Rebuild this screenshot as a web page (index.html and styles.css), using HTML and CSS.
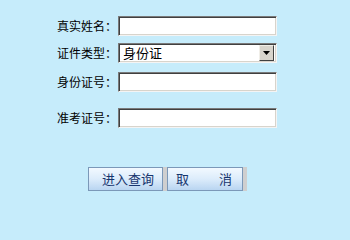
FILE: index.html
```html
<!DOCTYPE html>
<html lang="zh-CN">
<head>
<meta charset="utf-8">
<title>查询</title>
<link rel="stylesheet" href="styles.css">
</head>
<body>
<form class="form">
  <div class="row row-1">
    <label class="label">真实姓名：</label>
    <input class="field" type="text">
  </div>
  <div class="row row-2">
    <label class="label">证件类型：</label>
    <div class="select">
      <span class="select-text">身份证</span>
      <span class="select-arrow"><svg width="7" height="4" viewBox="0 0 7 4"><path d="M0 0H7L3.5 4Z" fill="#000"/></svg></span>
    </div>
  </div>
  <div class="row row-3">
    <label class="label">身份证号：</label>
    <input class="field" type="text">
  </div>
  <div class="row row-4">
    <label class="label">准考证号：</label>
    <input class="field" type="text">
  </div>
  <div class="actions">
    <button class="btn btn-submit" type="button">进入查询</button>
    <button class="btn btn-cancel" type="button"><span>取</span><span>消</span></button>
  </div>
</form>
</body>
</html>
```

FILE: styles.css
```css
html, body {
  margin: 0;
  padding: 0;
  background: #c6ecfb;
}
body {
  font-family: "Noto Sans CJK SC", "Noto Sans", sans-serif;
  font-size: 12px;
  color: #000;
}
.form {
  display: flex;
  flex-direction: column;
  padding: 16px 0 0 57px;
}
.row {
  display: flex;
  align-items: center;
  height: 20px;
}
.row-2 { margin-top: 7px; }
.row-3 { margin-top: 9px; }
.row-4 { margin-top: 16px; }
.label {
  width: 61px;
  line-height: 20px;
  font-size: 12px;
  white-space: nowrap;
}
.field {
  box-sizing: border-box;
  width: 159px;
  height: 20px;
  margin: 0;
  padding: 0 3px;
  background: #fff;
  border: 1px solid;
  border-color: #7a7a7a #f4f4f4 #f4f4f4 #7a7a7a;
  box-shadow: inset 1px 1px 0 #404040, inset -1px -1px 0 #d8d4cc;
  outline: none;
}
.select {
  box-sizing: border-box;
  width: 159px;
  height: 20px;
  display: flex;
  align-items: center;
  background: #fff;
  border: 1px solid;
  border-color: #7a7a7a #f4f4f4 #f4f4f4 #7a7a7a;
  box-shadow: inset 1px 1px 0 #404040, inset -1px -1px 0 #d8d4cc;
  padding: 2px 2px 2px 4px;
}
.select-text {
  flex: 1;
  font-size: 13px;
  line-height: 16px;
}
.select-arrow {
  box-sizing: border-box;
  width: 15px;
  height: 16px;
  display: flex;
  align-items: center;
  justify-content: center;
  background: #d8d4cc;
  border: 1px solid;
  border-color: #f0eee8 #404040 #404040 #f0eee8;
}
.actions {
  display: flex;
  margin: 39px 0 0 31px;
  gap: 4px;
}
.btn {
  box-sizing: border-box;
  height: 24px;
  margin: 0;
  font-family: "Noto Sans CJK SC", "Noto Sans", sans-serif;
  font-size: 13px;
  line-height: 20px;
  color: #17356e;
  border: 1px solid #7b98b8;
  background: linear-gradient(#f2f9ff, #dcecfb 50%, #b9d5f1);
  box-shadow: 4px 0 0 #cfcfcf;
  cursor: pointer;
}
.btn-submit {
  width: 75px;
  padding: 0 0 0 5px;
  margin-right: 0;
}
.btn-cancel {
  width: 76px;
  display: flex;
  align-items: center;
  justify-content: space-between;
  padding: 0 10px 0 8px;
}
```
